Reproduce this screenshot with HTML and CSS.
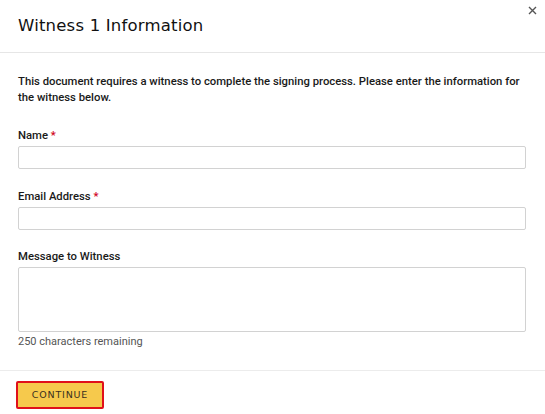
FILE: index.html
```html
<!DOCTYPE html>
<html>
<head>
<meta charset="utf-8">
<link rel="stylesheet" href="styles.css">
</head>
<body>
<div class="modal">
  <header class="modal-header">
    <h1 class="title">Witness 1 Information</h1>
    <button class="close" aria-label="Close">
      <svg width="9" height="9" viewBox="0 0 9 9"><path d="M1 1L8 8M8 1L1 8" stroke="#555" stroke-width="1.4"/></svg>
    </button>
  </header>
  <div class="modal-body">
    <p class="intro">This document requires a witness to complete the signing process. Please enter the information for the witness below.</p>
    <div class="field">
      <label class="label">Name <span class="req">*</span></label>
      <input class="input" type="text">
    </div>
    <div class="field">
      <label class="label">Email Address <span class="req">*</span></label>
      <input class="input" type="text">
    </div>
    <div class="field">
      <label class="label">Message to Witness</label>
      <textarea class="textarea"></textarea>
      <div class="hint">250 characters remaining</div>
    </div>
  </div>
  <footer class="modal-footer">
    <button class="btn">CONTINUE</button>
  </footer>
</div>
</body>
</html>
```
FILE: styles.css
```css
* { box-sizing: border-box; }
html, body { margin: 0; padding: 0; background: #fff; }
body { font-family: Roboto, "Liberation Sans", Arial, sans-serif; color: #111; }
.modal { width: 545px; height: 414px; display: flex; flex-direction: column; }
.modal-header { height: 54px; border-bottom: 1px solid #e6e6e6; display: flex; align-items: flex-start; justify-content: space-between; padding: 0 7px 0 18px; }
.title { margin: 16px 0 0; font-family: "DejaVu Sans", sans-serif; font-weight: 400; font-size: 16.5px; letter-spacing: 0.2px; color: #111; }
.close { background: none; border: 0; padding: 0; margin-top: 4px; width: 12px; height: 12px; display: flex; align-items: center; justify-content: center; }
.modal-body { padding: 21px 18px 0 18px; flex: 1; border-bottom: 1px solid #ececec; }
.intro { margin: 0 0 24px; font-size: 11.3px; font-weight: 500; line-height: 15.5px; color: #1a1a1a; }
.field { margin-bottom: 20.5px; }
.label { display: block; font-size: 11.3px; font-weight: 500; color: #1a1a1a; margin-bottom: 3px; line-height: 14px; }
.req { color: #d0021b; }
.input { display: block; width: 508px; height: 23px; border: 1px solid #d2d2d2; border-radius: 2px; background: #fff; margin: 0; }
.textarea { display: block; width: 508px; height: 65px; border: 1px solid #d2d2d2; border-radius: 2px; resize: none; margin: 0; }
.hint { font-size: 11px; color: #555; margin-top: 3px; line-height: 14px; }
.modal-footer { height: 44px; padding: 10px 16px 0; }
.btn { width: 88px; height: 28px; background: #f6c94c; border: 2px solid #e0101a; border-radius: 2px; font-family: "DejaVu Sans", sans-serif; font-size: 9.5px; letter-spacing: 0.8px; color: #3a3020; padding: 0; }
```
